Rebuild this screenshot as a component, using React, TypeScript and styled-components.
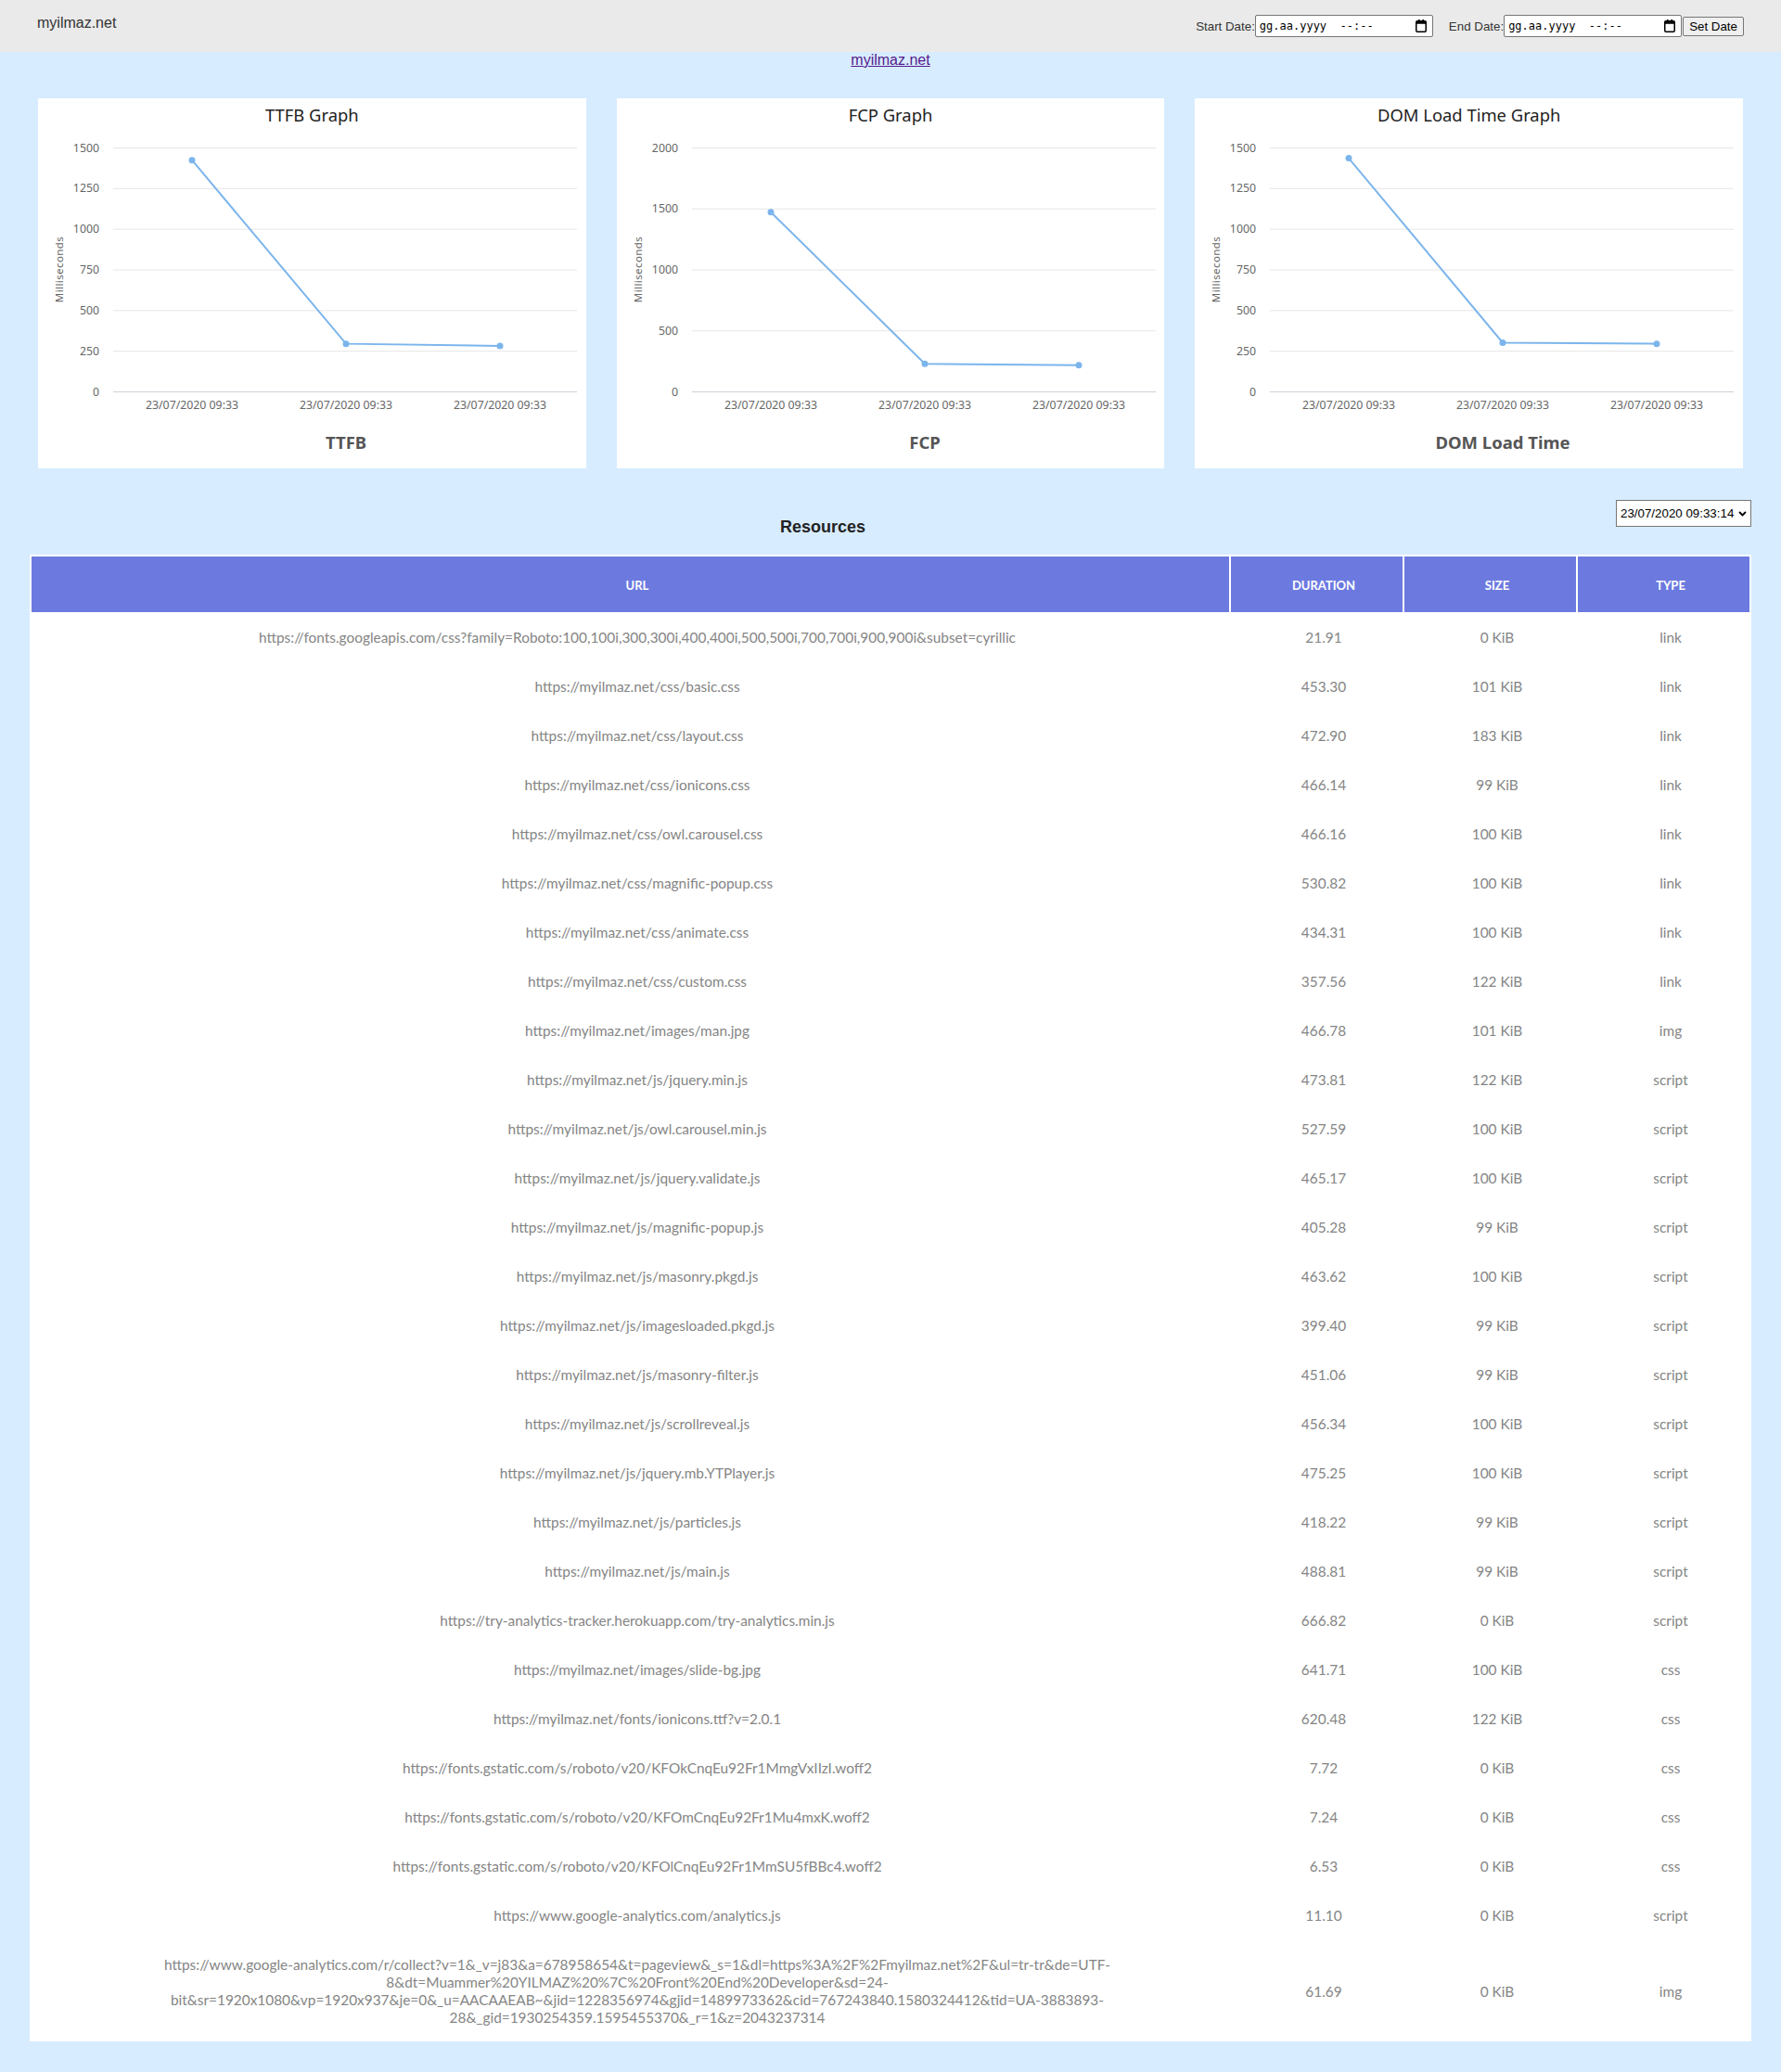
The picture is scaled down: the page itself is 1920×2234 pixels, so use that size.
import React from "react";
import styled, { createGlobalStyle } from "styled-components";

const GlobalStyle = createGlobalStyle`
  html, body { margin: 0; padding: 0; }
  body {
    background: #d7ecff;
    font-family: "Liberation Sans", Arial, sans-serif;
  }
`;

const Page = styled.div`
  padding-bottom: 33px;
`;

/* ---------- top bar ---------- */
const TopBar = styled.header`
  height: 56px;
  box-sizing: border-box;
  background: #eaeaea;
  display: flex;
  align-items: center;
  justify-content: space-between;
  padding: 0 40px;
`;

const Brand = styled.div`
  font-size: 16px;
  color: #333;
  margin-top: -7px;
`;

const DateControls = styled.form`
  display: flex;
  align-items: center;
  margin: 0;
`;

const FieldLabel = styled.label<{ $gap?: number }>`
  font-size: 13.333px;
  color: #333;
  margin-left: ${(p) => p.$gap ?? 0}px;
`;

const DateField = styled.div`
  width: 192px;
  height: 24px;
  box-sizing: border-box;
  border: 1px solid #767676;
  border-radius: 2px;
  background: #fff;
  display: flex;
  align-items: center;
  justify-content: space-between;
  padding: 0 6px 0 4px;
  font: 12px "DejaVu Sans Mono", "Liberation Mono", monospace;
  color: #000;
  white-space: pre;
`;

const SetButton = styled.button`
  margin-left: 1px;
  height: 21px;
  box-sizing: border-box;
  padding: 0 6px;
  border: 1px solid #767676;
  border-radius: 2px;
  background: #efefef;
  font: 13.333px "Liberation Sans", Arial, sans-serif;
  color: #000;
`;

const LinkRow = styled.div`
  text-align: center;
  line-height: 18px;
  font-size: 16px;
`;

const SiteLink = styled.a`
  color: #551a8b;
  text-decoration: underline;
`;

/* ---------- charts ---------- */
const ChartRow = styled.section`
  display: flex;
  gap: 33px;
  padding: 0 41px;
  margin-top: 32px;
`;

const ChartCard = styled.div`
  flex: 1;
  height: 399px;
  box-sizing: border-box;
  background: #fff;
  padding-top: 6px;
  display: flex;
  flex-direction: column;
  align-items: center;
`;

const ChartTitle = styled.h3`
  margin: 0;
  font: 400 18.4px/24px "Noto Sans", "Open Sans", sans-serif;
  color: #222;
`;

const ChartSvg = styled.svg`
  display: block;
  align-self: flex-start;
  text {
    font-family: "Noto Sans", "Open Sans", sans-serif;
  }
`;

const PLOT = { left: 83, right: 581, top: 23, bottom: 286 };
const LINE_COLOR = "#7cb5ec";

type ChartProps = {
  title: string;
  axis: string;
  max: number;
  step: number;
  values: number[];
};

function LineChart({ title, axis, max, step, values }: ChartProps) {
  const ticks: number[] = [];
  for (let v = 0; v <= max; v += step) ticks.push(v);
  const y = (v: number) => PLOT.bottom - (v / max) * (PLOT.bottom - PLOT.top);
  const w = PLOT.right - PLOT.left;
  const x = (i: number) => PLOT.left + ((i + 0.5) * w) / values.length;
  const pts = values.map((v, i) => `${x(i)},${y(v)}`).join(" ");
  return (
    <ChartCard>
      <ChartTitle>{title}</ChartTitle>
      <ChartSvg width={590} height={369}>
        {ticks.map((t) => (
          <g key={t}>
            <line
              x1={81}
              x2={PLOT.right}
              y1={y(t) + 0.5}
              y2={y(t) + 0.5}
              stroke={t === 0 ? "#cdd1d9" : "#e6e6e6"}
              strokeWidth={1}
            />
            <text x={66} y={y(t)} textAnchor="end" dominantBaseline="central" fontSize={12.3} fill="#666">
              {t}
            </text>
          </g>
        ))}
        <text
          x={0}
          y={0}
          transform={`translate(22 ${(PLOT.top + PLOT.bottom) / 2}) rotate(-90)`}
          textAnchor="middle"
          dominantBaseline="central"
          fontSize={11.5}
          fill="#666"
          letterSpacing={0.4}
        >
          Milliseconds
        </text>
        {values.map((_, i) => (
          <text key={i} x={x(i)} y={300} textAnchor="middle" dominantBaseline="central" fontSize={12.3} fill="#666">
            23/07/2020 09:33
          </text>
        ))}
        <text
          x={(PLOT.left + PLOT.right) / 2}
          y={340}
          textAnchor="middle"
          dominantBaseline="central"
          fontSize={18.5}
          fontWeight={700}
          fill="#555"
        >
          {axis}
        </text>
        <polyline points={pts} fill="none" stroke={LINE_COLOR} strokeWidth={2} />
        {values.map((v, i) => (
          <circle key={i} cx={x(i)} cy={y(v)} r={3.5} fill={LINE_COLOR} />
        ))}
      </ChartSvg>
    </ChartCard>
  );
}

/* ---------- resources ---------- */
const ResourcesBar = styled.div`
  display: flex;
  align-items: flex-start;
  margin: 33px 32px 0;
`;

const ResourcesTitle = styled.h2`
  flex: 1;
  margin: 0;
  padding-top: 20px;
  text-align: center;
  font: 700 18px/21px "Liberation Sans", Arial, sans-serif;
  color: #222;
`;

const SelectWrap = styled.div`
  position: relative;
  width: 146px;
  height: 29px;
  margin-top: 1px;
`;

const RunSelect = styled.select`
  appearance: none;
  -webkit-appearance: none;
  width: 100%;
  height: 100%;
  box-sizing: border-box;
  border: 1px solid #767676;
  border-radius: 0;
  background: #fff;
  color: #000;
  padding: 0 0 0 4px;
  font: 13.333px "Liberation Sans", Arial, sans-serif;
`;

const Chevron = styled.svg`
  position: absolute;
  right: 5px;
  top: 12px;
  pointer-events: none;
`;

const TableFrame = styled.div`
  margin: 19px 32px 0;
  background: #fff;
  padding: 2px 2px 0;
`;

const Row = styled.div`
  display: grid;
  grid-template-columns: 1fr 185px 185px 185px;
  column-gap: 2px;
  align-items: center;
`;

const HeadCell = styled.div`
  height: 60px;
  box-sizing: border-box;
  background: #6c7ae0;
  display: flex;
  align-items: center;
  justify-content: center;
  padding: 1px 10px 0 25px;
  color: #fff;
  font: 700 13px "Lato", sans-serif;
  text-transform: uppercase;
`;

const Cell = styled.div`
  padding: 18px 10px 16px 25px;
  text-align: center;
  font: 400 15.4px/19px "Lato", sans-serif;
  color: #858585;
`;

const LONG_URL =
  "https://www.google-analytics.com/r/collect?v=1&_v=j83&a=678958654&t=pageview&_s=1&dl=https%3A%2F%2Fmyilmaz.net%2F&ul=tr-tr&de=UTF-8&dt=Muammer%20YILMAZ%20%7C%20Front%20End%20Developer&sd=24-bit&sr=1920x1080&vp=1920x937&je=0&_u=AACAAEAB~&jid=1228356974&gjid=1489973362&cid=767243840.1580324412&tid=UA-3883893-28&_gid=1930254359.1595455370&_r=1&z=2043237314";

const resources: [string, string, string, string][] = [
  ["https://fonts.googleapis.com/css?family=Roboto:100,100i,300,300i,400,400i,500,500i,700,700i,900,900i&subset=cyrillic", "21.91", "0 KiB", "link"],
  ["https://myilmaz.net/css/basic.css", "453.30", "101 KiB", "link"],
  ["https://myilmaz.net/css/layout.css", "472.90", "183 KiB", "link"],
  ["https://myilmaz.net/css/ionicons.css", "466.14", "99 KiB", "link"],
  ["https://myilmaz.net/css/owl.carousel.css", "466.16", "100 KiB", "link"],
  ["https://myilmaz.net/css/magnific-popup.css", "530.82", "100 KiB", "link"],
  ["https://myilmaz.net/css/animate.css", "434.31", "100 KiB", "link"],
  ["https://myilmaz.net/css/custom.css", "357.56", "122 KiB", "link"],
  ["https://myilmaz.net/images/man.jpg", "466.78", "101 KiB", "img"],
  ["https://myilmaz.net/js/jquery.min.js", "473.81", "122 KiB", "script"],
  ["https://myilmaz.net/js/owl.carousel.min.js", "527.59", "100 KiB", "script"],
  ["https://myilmaz.net/js/jquery.validate.js", "465.17", "100 KiB", "script"],
  ["https://myilmaz.net/js/magnific-popup.js", "405.28", "99 KiB", "script"],
  ["https://myilmaz.net/js/masonry.pkgd.js", "463.62", "100 KiB", "script"],
  ["https://myilmaz.net/js/imagesloaded.pkgd.js", "399.40", "99 KiB", "script"],
  ["https://myilmaz.net/js/masonry-filter.js", "451.06", "99 KiB", "script"],
  ["https://myilmaz.net/js/scrollreveal.js", "456.34", "100 KiB", "script"],
  ["https://myilmaz.net/js/jquery.mb.YTPlayer.js", "475.25", "100 KiB", "script"],
  ["https://myilmaz.net/js/particles.js", "418.22", "99 KiB", "script"],
  ["https://myilmaz.net/js/main.js", "488.81", "99 KiB", "script"],
  ["https://try-analytics-tracker.herokuapp.com/try-analytics.min.js", "666.82", "0 KiB", "script"],
  ["https://myilmaz.net/images/slide-bg.jpg", "641.71", "100 KiB", "css"],
  ["https://myilmaz.net/fonts/ionicons.ttf?v=2.0.1", "620.48", "122 KiB", "css"],
  ["https://fonts.gstatic.com/s/roboto/v20/KFOkCnqEu92Fr1MmgVxIIzI.woff2", "7.72", "0 KiB", "css"],
  ["https://fonts.gstatic.com/s/roboto/v20/KFOmCnqEu92Fr1Mu4mxK.woff2", "7.24", "0 KiB", "css"],
  ["https://fonts.gstatic.com/s/roboto/v20/KFOlCnqEu92Fr1MmSU5fBBc4.woff2", "6.53", "0 KiB", "css"],
  ["https://www.google-analytics.com/analytics.js", "11.10", "0 KiB", "script"],
  [LONG_URL, "61.69", "0 KiB", "img"],
];

function CalendarIcon() {
  return (
    <svg width="12" height="14" viewBox="0 0 12 14">
      <rect x="3" y="0" width="1.6" height="3" fill="#000" />
      <rect x="7.4" y="0" width="1.6" height="3" fill="#000" />
      <rect x="0.75" y="1.75" width="10.5" height="11.5" rx="1.2" fill="none" stroke="#000" strokeWidth="1.5" />
      <rect x="0.75" y="1.75" width="10.5" height="3" fill="#000" />
    </svg>
  );
}

export default function App() {
  return (
    <Page>
      <GlobalStyle />
      <TopBar>
        <Brand>myilmaz.net</Brand>
        <DateControls onSubmit={(e) => e.preventDefault()}>
          <FieldLabel>Start Date:</FieldLabel>
          <DateField>
            <span>gg.aa.yyyy  --:--</span>
            <CalendarIcon />
          </DateField>
          <FieldLabel $gap={17}>End Date:</FieldLabel>
          <DateField>
            <span>gg.aa.yyyy  --:--</span>
            <CalendarIcon />
          </DateField>
          <SetButton type="submit">Set Date</SetButton>
        </DateControls>
      </TopBar>

      <LinkRow>
        <SiteLink href="#">myilmaz.net</SiteLink>
      </LinkRow>

      <ChartRow>
        <LineChart title="TTFB Graph" axis="TTFB" max={1500} step={250} values={[1422, 293, 280]} />
        <LineChart title="FCP Graph" axis="FCP" max={2000} step={500} values={[1470, 226, 215]} />
        <LineChart title="DOM Load Time Graph" axis="DOM Load Time" max={1500} step={250} values={[1434, 300, 293]} />
      </ChartRow>

      <ResourcesBar>
        <ResourcesTitle>Resources</ResourcesTitle>
        <SelectWrap>
          <RunSelect defaultValue="1">
            <option value="1">23/07/2020 09:33:14</option>
          </RunSelect>
          <Chevron width="9" height="6" viewBox="0 0 9 6">
            <path d="M1 1 L4.5 4.5 L8 1" fill="none" stroke="#000" strokeWidth="1.8" />
          </Chevron>
        </SelectWrap>
      </ResourcesBar>

      <TableFrame>
        <Row>
          <HeadCell>URL</HeadCell>
          <HeadCell>Duration</HeadCell>
          <HeadCell>Size</HeadCell>
          <HeadCell>Type</HeadCell>
        </Row>
        {resources.map(([url, dur, size, type], i) => (
          <Row key={i}>
            <Cell>{url}</Cell>
            <Cell>{dur}</Cell>
            <Cell>{size}</Cell>
            <Cell>{type}</Cell>
          </Row>
        ))}
      </TableFrame>
    </Page>
  );
}
